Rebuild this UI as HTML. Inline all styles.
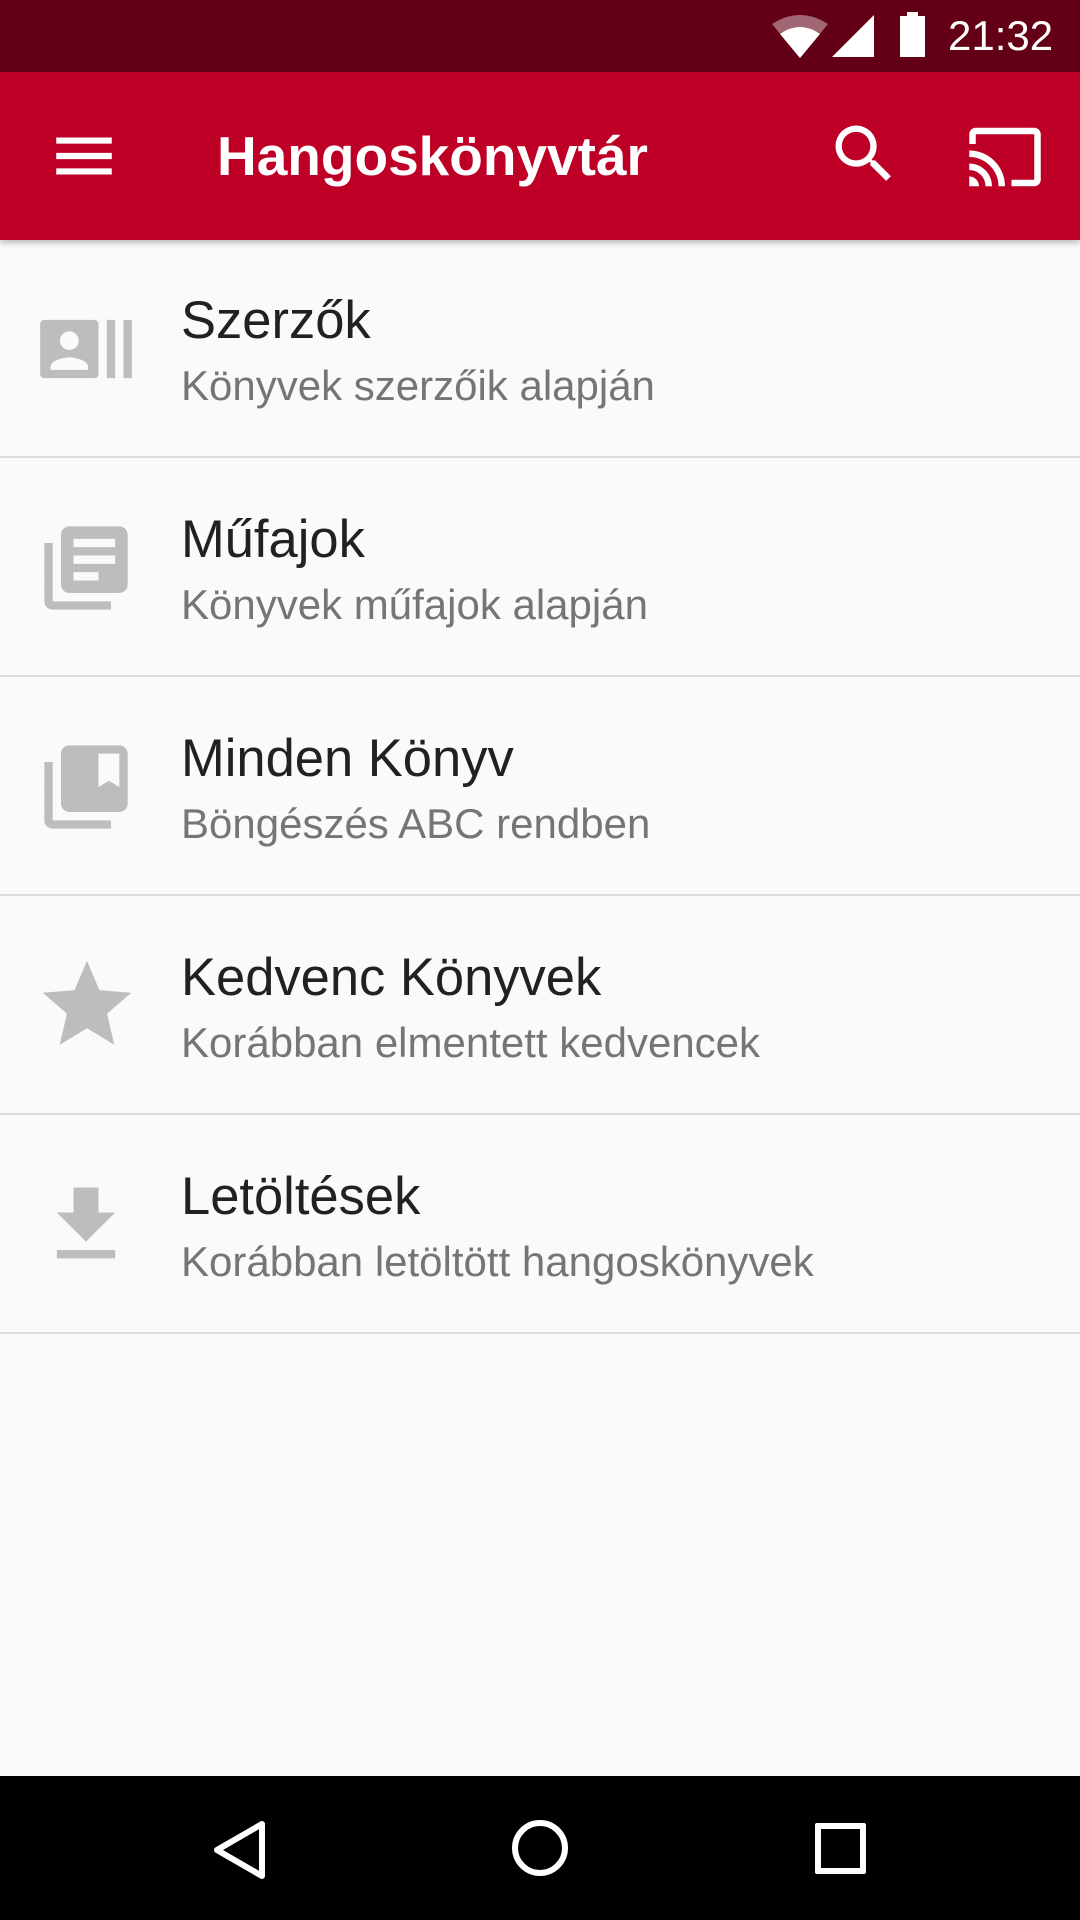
<!DOCTYPE html>
<html><head><meta charset="utf-8"><style>
*{margin:0;padding:0;box-sizing:border-box}
body{width:1080px;height:1920px;background:#fafafa;font-family:"Liberation Sans",sans-serif;position:relative;overflow:hidden}
.status{position:absolute;left:0;top:0;width:1080px;height:72px;background:#630018}
.bar{position:absolute;left:0;top:72px;width:1080px;height:168px;background:#be0026;box-shadow:0 3px 6px rgba(0,0,0,.25)}
.title{position:absolute;left:217px;top:124px;font-size:55px;font-weight:bold;color:#fff;line-height:64px}
.row{position:absolute;left:0;width:1080px;height:219px;border-bottom:2px solid #dcdcdc}
.row svg{position:absolute;left:36px;top:60px;width:100px;height:100px;fill:#bdbdbd}
.row .t{position:absolute;left:181px;top:51px;font-size:52.5px;color:#212121;line-height:62px}
.row .s{position:absolute;left:181px;top:122px;font-size:42px;color:#757575;line-height:50px}
.nav{position:absolute;left:0;top:1776px;width:1080px;height:144px;background:#000}
</style></head><body>
<div class="status">
<svg style="position:absolute;left:772px;top:14px" width="56" height="44" viewBox="0 0 56 44"><path d="M0 10 Q28 -8 56 10 L28 44Z" fill="#fff" opacity=".4"/><path d="M8 20 Q28 6 48 20 L28 44Z" fill="#fff"/></svg>
<svg style="position:absolute;left:832px;top:15px" width="42" height="42"><path d="M42 0V42H0Z" fill="#fff"/></svg>
<div style="position:absolute;left:900px;top:16px;width:25px;height:41px;background:#fff"></div>
<div style="position:absolute;left:907px;top:12px;width:11px;height:5px;background:#fff"></div>
<div style="position:absolute;left:948px;top:12px;font-size:42px;color:#fff;line-height:48px">21:32</div>
</div>
<div class="bar">
<svg style="position:absolute;left:47px;top:47px" width="74" height="74" viewBox="0 0 24 24"><path d="M3 18h18v-2H3v2zm0-5h18v-2H3v2zm0-7v2h18V6H3z" fill="#fff"/></svg>
<svg style="position:absolute;left:826px;top:44px" width="76" height="76" viewBox="0 0 24 24"><path d="M15.5 14h-.79l-.28-.27A6.470 6.470 0 0 0 16 9.5 6.5 6.5 0 1 0 9.5 16c1.61 0 3.090-.59 4.23-1.57l.27.28v.79l5 4.99L20.49 19l-4.99-5zm-6 0C7.01 14 5 11.99 5 9.5S7.01 5 9.5 5 14 7.01 14 9.5 11.99 14 9.5 14z" fill="#fff"/></svg>
<svg style="position:absolute;left:966px;top:46px" width="78" height="78" viewBox="0 0 24 24"><path d="M21 3H3c-1.1 0-2 .9-2 2v3h2V5h18v14h-7v2h7c1.1 0 2-.9 2-2V5c0-1.1-.9-2-2-2zM1 18v3h3c0-1.66-1.34-3-3-3zm0-4v2c2.76 0 5 2.24 5 5h2c0-3.87-3.13-7-7-7zm0-4v2a9 9 0 0 1 9 9h2c0-6.08-4.93-11-11-11z" fill="#fff"/></svg>
</div>
<div class="title">Hangoskönyvtár</div>

<div class="row" style="top:239px"><svg viewBox="0 0 24 24"><path d="M21 5v14h2V5h-2zm-4 14h2V5h-2v14zM14 5H2c-.55 0-1 .45-1 1v12c0 .55.45 1 1 1h12c.55 0 1-.45 1-1V6c0-.55-.45-1-1-1zM8 7.75c1.24 0 2.25 1.01 2.25 2.25S9.24 12.25 8 12.25 5.75 11.24 5.75 10 6.76 7.75 8 7.75zM12.5 17h-9v-.75c0-1.5 3-2.25 4.5-2.25s4.5.75 4.5 2.25V17z"/></svg><div class="t">Szerzők</div><div class="s">Könyvek szerzőik alapján</div></div>
<div class="row" style="top:458px"><svg viewBox="0 0 24 24"><path d="M4 6H2v14c0 1.1.9 2 2 2h14v-2H4V6zm16-4H8c-1.1 0-2 .9-2 2v12c0 1.1.9 2 2 2h12c1.1 0 2-.9 2-2V4c0-1.1-.9-2-2-2zm-1 9H9V9h10v2zm-4 4H9v-2h6v2zm4-8H9V5h10v2z"/></svg><div class="t">Műfajok</div><div class="s">Könyvek műfajok alapján</div></div>
<div class="row" style="top:677px"><svg viewBox="0 0 24 24"><path d="M4 6H2v14c0 1.1.9 2 2 2h14v-2H4V6zm16-4H8c-1.1 0-2 .9-2 2v12c0 1.1.9 2 2 2h12c1.1 0 2-.9 2-2V4c0-1.1-.9-2-2-2zm0 10l-2.5-1.5L15 12V4h5v8z"/></svg><div class="t">Minden Könyv</div><div class="s">Böngészés ABC rendben</div></div>
<div class="row" style="top:896px"><svg viewBox="0 0 24 24" style="left:34px;top:56px;width:106px;height:106px"><path d="M12 17.27L18.18 21l-1.64-7.03L22 9.24l-7.19-.61L12 2 9.19 8.63 2 9.24l5.46 4.73L5.82 21z"/></svg><div class="t">Kedvenc Könyvek</div><div class="s">Korábban elmentett kedvencek</div></div>
<div class="row" style="top:1115px"><svg viewBox="0 0 24 24"><path d="M19 9h-4V3H9v6H5l7 7 7-7zM5 18v2h14v-2H5z"/></svg><div class="t">Letöltések</div><div class="s">Korábban letöltött hangoskönyvek</div></div>

<div class="nav">
<svg style="position:absolute;left:212px;top:44px" width="56" height="60"><path d="M50 4V56L5 30Z" fill="none" stroke="#fff" stroke-width="6" stroke-linejoin="round"/></svg>
<svg style="position:absolute;left:510px;top:42px" width="60" height="60"><circle cx="30" cy="30" r="25" fill="none" stroke="#fff" stroke-width="6"/></svg>
<div style="position:absolute;left:815px;top:47px;width:51px;height:51px;border:6px solid #fff;border-radius:2px"></div>
</div>
</body></html>
